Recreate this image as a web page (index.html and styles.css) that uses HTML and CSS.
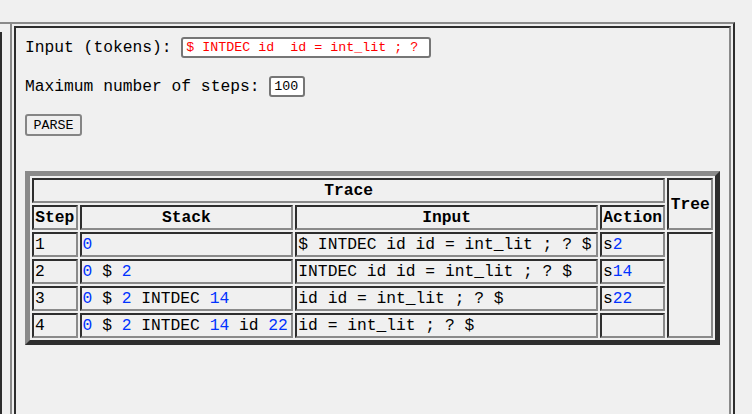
FILE: index.html
```html
<!DOCTYPE html>
<html>
<head>
<meta charset="utf-8">
<link rel="stylesheet" href="styles.css">
</head>
<body>
<div class="page">
  <div class="side"><div class="side-bar"></div></div>
  <div class="frame-outer">
    <div class="frame-inner">
      <div class="row row-tokens">
        <span class="label">Input (tokens):</span>
        <input class="field tokens" type="text" value="$ INTDEC id  id = int_lit ; ?">
      </div>
      <div class="row row-steps">
        <span class="label">Maximum number of steps:</span>
        <input class="field steps" type="text" value="100">
      </div>
      <div class="row row-parse">
        <button class="parse" type="button">PARSE</button>
      </div>
      <table class="trace">
        <tbody>
          <tr><th colspan="4">Trace</th><th rowspan="2">Tree</th></tr>
          <tr><th>Step</th><th>Stack</th><th>Input</th><th>Action</th></tr>
          <tr><td>1</td><td><span class="n">0</span></td><td>$ INTDEC id id = int_lit ; ? $</td><td>s<span class="n">2</span></td><td rowspan="4"></td></tr>
          <tr><td>2</td><td><span class="n">0</span> $ <span class="n">2</span></td><td>INTDEC id id = int_lit ; ? $</td><td>s<span class="n">14</span></td></tr>
          <tr><td>3</td><td><span class="n">0</span> $ <span class="n">2</span> INTDEC <span class="n">14</span></td><td>id id = int_lit ; ? $</td><td>s<span class="n">22</span></td></tr>
          <tr><td>4</td><td><span class="n">0</span> $ <span class="n">2</span> INTDEC <span class="n">14</span> id <span class="n">22</span></td><td>id = int_lit ; ? $</td><td></td></tr>
        </tbody>
      </table>
    </div>
  </div>
</div>
</body>
</html>
```

FILE: styles.css
```css
html, body {
  margin: 0;
  padding: 0;
  background: #f0f0f0;
}
body {
  font-family: "Liberation Mono", "Courier New", monospace;
  font-size: 16.3px;
  color: #000;
  height: 414px;
  overflow: hidden;
}
.page {
  display: flex;
  padding-top: 22px;
  height: 460px;
  box-sizing: border-box;
}
.side {
  width: 10px;
  flex: none;
  display: flex;
  flex-direction: column;
  border-top: 2px solid #8a8a8a;
}
.side-bar {
  width: 2px;
  flex: 1;
  margin-top: 8px;
  background: #2e2e2e;
}
.frame-outer {
  width: 725px;
  flex: none;
  box-sizing: border-box;
  border: 2px solid;
  border-color: #8a8a8a #2e2e2e #2e2e2e #8a8a8a;
  padding: 2px;
  display: flex;
}
.frame-inner {
  flex: 1;
  border: 2px solid;
  border-color: #2e2e2e #8a8a8a #8a8a8a #2e2e2e;
  padding: 9px 9px 0 9px;
}
.row {
  display: flex;
  align-items: center;
  height: 21px;
}
.row-steps {
  margin-top: 18px;
}
.row-parse {
  margin-top: 17px;
  height: 22px;
}
.label {
  white-space: pre;
}
.field {
  box-sizing: border-box;
  height: 21px;
  margin: 0 0 0 9.8px;
  border: 2px solid #767676;
  border-radius: 3px;
  background: #fff;
  padding: 0 3px;
  font-family: "Liberation Mono", "Courier New", monospace;
  font-size: 13.33px;
  color: #000;
}
.tokens {
  width: 250px;
  color: #f00;
}
.steps {
  width: 36px;
}
.parse {
  box-sizing: border-box;
  height: 22px;
  width: 57px;
  margin: 0;
  padding: 0;
  border: 2px solid #858585;
  border-radius: 3px;
  background: #efefef;
  font-family: "Liberation Mono", "Courier New", monospace;
  font-size: 13.33px;
  color: #000;
}
.trace {
  width: 100%;
  margin-top: 35px;
  border: 5px solid;
  border-color: #8a8a8a #2e2e2e #2e2e2e #8a8a8a;
  border-spacing: 2px;
  font-size: 16.3px;
}
.trace th,
.trace td {
  border: 2px solid;
  border-color: #2e2e2e #8a8a8a #8a8a8a #2e2e2e;
  padding: 1px;
  line-height: 19px;
  white-space: nowrap;
}
.trace th {
  font-weight: bold;
  text-align: center;
}
.trace td {
  text-align: left;
}
.n {
  color: #0033ff;
}
```
